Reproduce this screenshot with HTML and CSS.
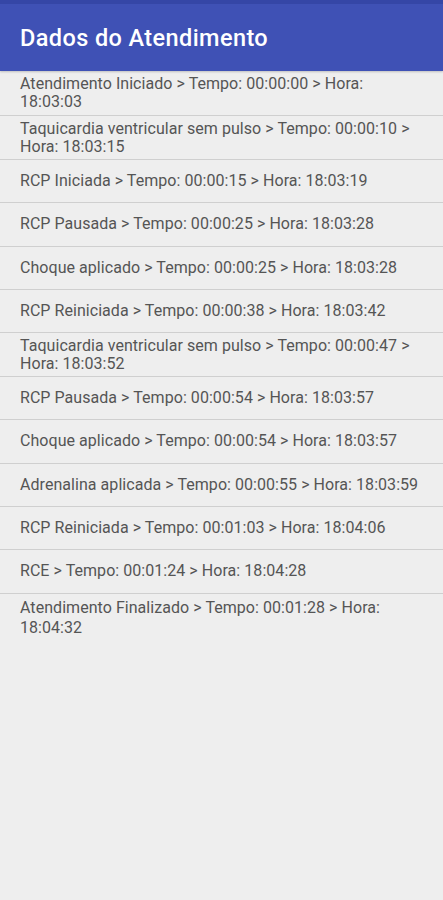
FILE: index.html
```html
<!DOCTYPE html>
<html lang="pt">
<head>
    <meta charset="UTF-8">
    <title>Dados do Atendimento</title>
    <link rel="stylesheet" href="styles.css">
</head>
<body>
    <div class="toolbar">
        <h1>Dados do Atendimento</h1>
    </div>
    <ul class="log">
        <li>Atendimento Iniciado &gt; Tempo: 00:00:00 &gt; Hora: 18:03:03</li>
        <li>Taquicardia ventricular sem pulso &gt; Tempo: 00:00:10 &gt; Hora: 18:03:15</li>
        <li>RCP Iniciada &gt; Tempo: 00:00:15 &gt; Hora: 18:03:19</li>
        <li>RCP Pausada &gt; Tempo: 00:00:25 &gt; Hora: 18:03:28</li>
        <li>Choque aplicado &gt; Tempo: 00:00:25 &gt; Hora: 18:03:28</li>
        <li>RCP Reiniciada &gt; Tempo: 00:00:38 &gt; Hora: 18:03:42</li>
        <li>Taquicardia ventricular sem pulso &gt; Tempo: 00:00:47 &gt; Hora: 18:03:52</li>
        <li>RCP Pausada &gt; Tempo: 00:00:54 &gt; Hora: 18:03:57</li>
        <li>Choque aplicado &gt; Tempo: 00:00:54 &gt; Hora: 18:03:57</li>
        <li>Adrenalina aplicada &gt; Tempo: 00:00:55 &gt; Hora: 18:03:59</li>
        <li>RCP Reiniciada &gt; Tempo: 00:01:03 &gt; Hora: 18:04:06</li>
        <li>RCE &gt; Tempo: 00:01:24 &gt; Hora: 18:04:28</li>
        <li>Atendimento Finalizado &gt; Tempo: 00:01:28 &gt; Hora: 18:04:32</li>
    </ul>
</body>
</html>
```

FILE: styles.css
```css
html, body {
    margin: 0;
    padding: 0;
}
body {
    font-family: Roboto, "Liberation Sans", sans-serif;
    background-color: #eeeeee;
    color: #555;
    min-height: 900px;
}
.toolbar {
    background-color: #3f51b5;
    border-top: 4px solid #3546a6;
    height: 67px;
    display: flex;
    align-items: center;
    padding: 0 20px;
    box-shadow: 0 1px 2px rgba(0,0,0,.2);
}
.toolbar h1 {
    margin: 0;
    color: #fff;
    font-size: 23.5px;
    font-weight: 500;
    letter-spacing: 0.4px;
}
.log {
    list-style: none;
    margin: 0;
    padding: 0;
}
.log li {
    min-height: 43.4px;
    box-sizing: border-box;
    display: flex;
    align-items: center;
    padding: 2px 20px;
    font-size: 16px;
    letter-spacing: 0.05px;
    line-height: 18px;
    border-bottom: 1px solid #cfcfcf;
}
.log li:first-child {
    min-height: 45.4px;
}
.log li:last-child {
    border-bottom: none;
    align-items: flex-start;
    padding-top: 4px;
    line-height: 20px;
}
```
